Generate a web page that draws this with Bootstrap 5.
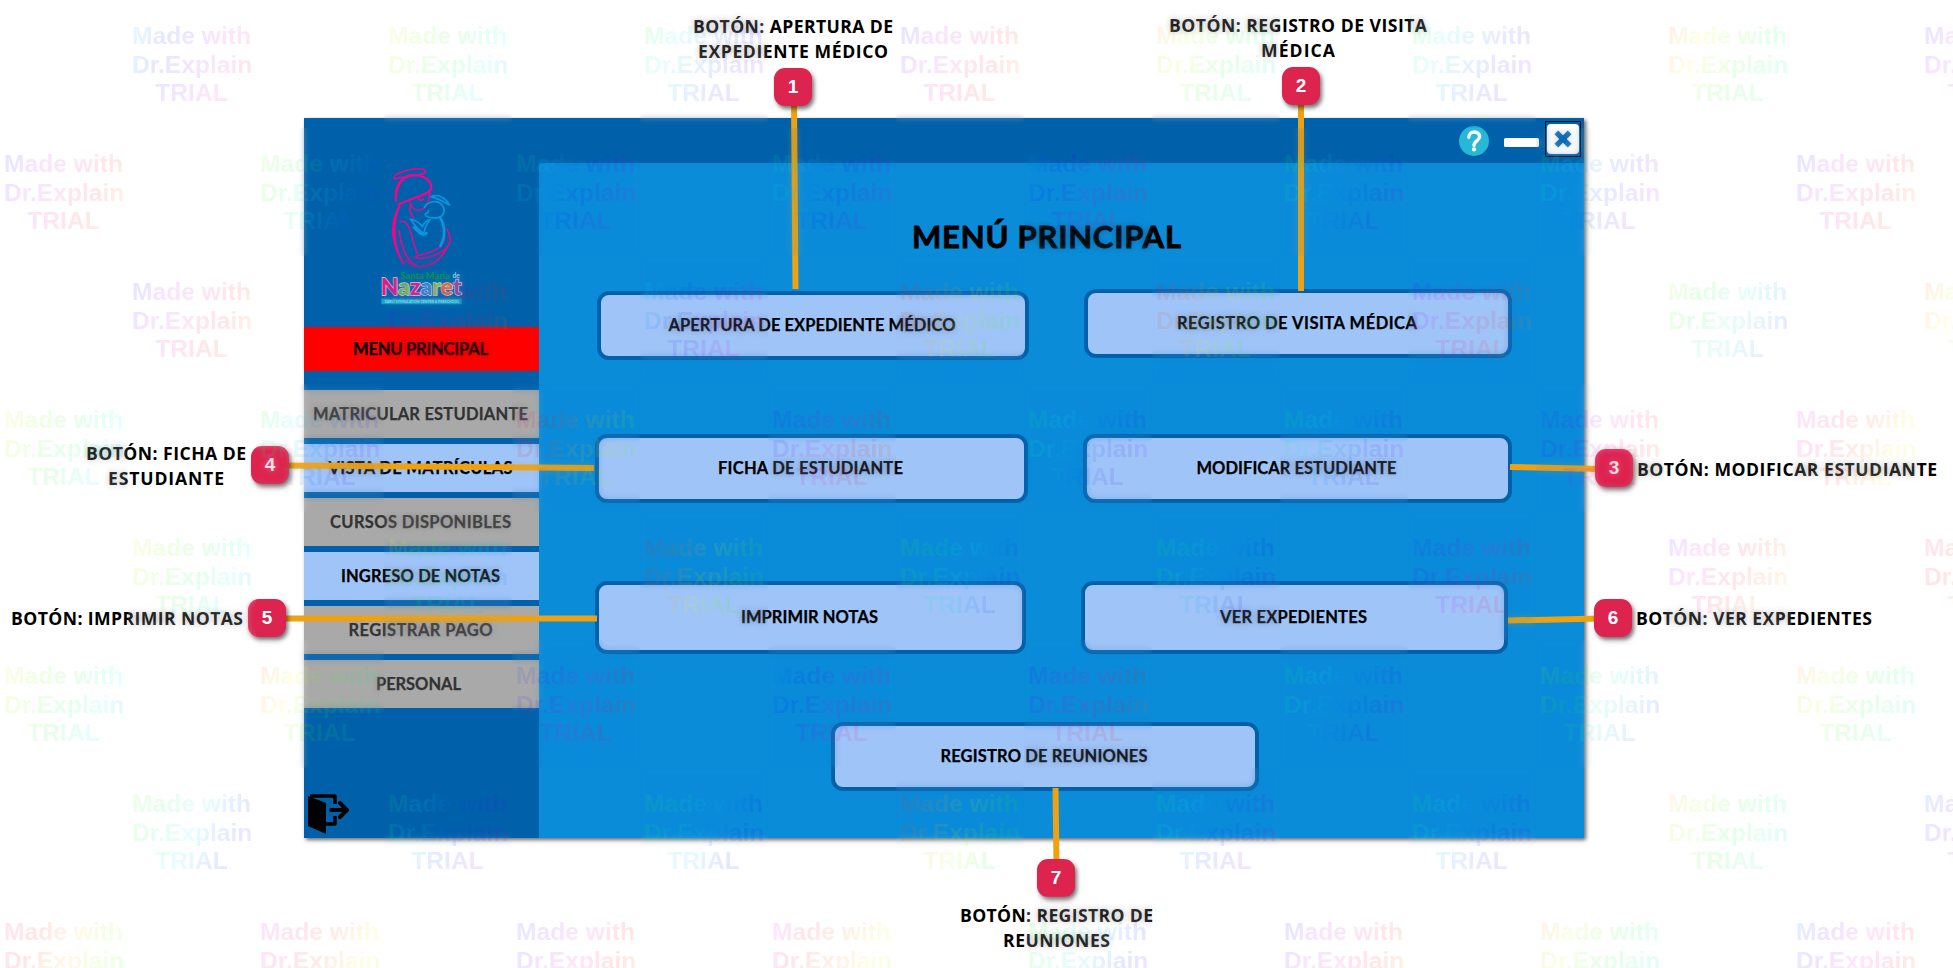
<!DOCTYPE html>
<html lang="es">
<head>
<meta charset="utf-8">
<title>Menú principal</title>
<link rel="stylesheet" href="https://cdn.jsdelivr.net/npm/bootstrap@5.3.0/dist/css/bootstrap.min.css">
<style>
  body { width: 1953px; height: 968px; background: #fff; color: #000; }
  .stage { width: 1953px; height: 968px; padding: 118px 0 0 304px; }
  .win { width: 1280px; height: 720px; background: #0a8cd9; box-shadow: 2px 2px 4px rgba(0,0,0,.6); }
  .side { width: 235px; background: #0061aa; }
  .ui { font-family: Lato, "Liberation Sans", sans-serif; font-weight: 700; font-size: 16.5px; line-height: 20px; }
  .ui .fit { position: relative; left: -1px; -webkit-text-stroke: .25px; }
  .brand { height: 209px; padding: 47px 0 0 76px; }
  .item { height: 48px; background: #a9a9a9; color: #333; }
  .item.on { background: #9fc4f8; color: #000; }
  .item.current { height: 44px; background: #f00; color: #000; margin-bottom: 19px; }
  .items { gap: 6px; }
  .top { height: 45px; background: #0061aa; padding-right: 3px; }
  .closer { width: 36px; height: 36px; border: 1px solid #000; background: #0061aa; padding: 2px 1px 2px; margin-top: 3px; }
  .closer > span { background: #fff; }
  h1.ui { font-size: 31px; line-height: 36px; margin: 55px 0 0 373px; }
  h1.ui .fit { left: 0; -webkit-text-stroke: .9px; }
  .opt { border: 4px solid #0061aa; border-radius: 12px; background: #9fc4f8; color: #000; padding-bottom: 2px; }
  .fit { display: inline-block; white-space: nowrap; }
  .callout { font-family: "Open Sans", "Noto Sans", sans-serif; font-weight: 700; font-size: 17.6px; line-height: 25px; }
  .pin { width: 38px; height: 38px; border-radius: 11px; background: #dc244f; color: #fff; box-shadow: 2px 3px 4px rgba(0,0,0,.55);
         font: 700 19px/38px "Liberation Sans", sans-serif; text-align: center; }
  .marks { display: grid; grid-template-columns: repeat(16, 128px); grid-auto-rows: 128px; width: 1953px; height: 968px; overflow: hidden; pointer-events: none; }
  .tile { position: relative; }
  .haze { position: absolute; inset: 0; opacity: .26; backdrop-filter: blur(3px); }
  .tint { position: absolute; left: 4px; top: 22px; width: 119px; opacity: .1; text-align: center;
          font: 700 24.6px/28.5px "Liberation Sans", sans-serif; color: transparent; -webkit-background-clip: text; background-clip: text; }
</style>
</head>
<body class="overflow-hidden position-relative">
<div class="stage">
  <div class="win d-flex">
    <aside class="side d-flex flex-column flex-shrink-0 ui">
      <div class="brand">
        <svg width="83" height="142" viewBox="270 165 250 427" fill="none" stroke-linecap="round" class="d-block">
          <g stroke="#f0058c" stroke-width="4.500">
            <path d="M312 204c0-14 40-28 76-28 26 0 24 12 4 17-18 4-50 5-76 14z"/>
            <path d="M318 272c-6-56 28-80 62-76 34 3 46 22 44 40-4 18-60 28-98 48" stroke-width="7"/>
            <path d="M330 284c-12 26-16 50-16 78 0 46 12 76 28 102-22-36-34-70-33-108 1-32 11-54 21-72z" fill="#f0058c" stroke-width="6"/>
            <path d="M318 262c0-40 22-62 52-68-34 6-46 30-52 68z" fill="#f0058c"/>
            <path d="M420 245c-2 30-12 54-34 56-12 0-20-8-24-20-6 20 0 30 10 44M386 268q6 6 14 0"/>
            <path d="M330 335c18-4 26 10 32 30 8 30 12 50 22 68"/>
            <path d="M328 362c2 20 6 44 20 72 12 24 24 36 44 38 50-2 76-46 90-78 2-14-6-24-10-36" stroke-width="5"/>
            <path d="M466 382c-6 40-48 44-92 60 10 10 70 0 92-26" stroke="#d0108c" stroke-width="5"/>
          </g>
          <path d="M348 452c22 26 56 24 80 6" stroke="#93278f" stroke-width="6"/>
          <g stroke="#0a96e0" stroke-width="5">
            <path d="M424 260c18-10 46 4 54 24-14-6-30-18-54-24z"/>
            <path d="M404 292c10-20 44-24 56-2 8 18-2 34-22 34-14 0-30-2-32-10 2-6 10-2 10-12"/>
            <path d="M362 328c14 2 26 10 36 22 4-12 12-18 24-22-10 10-16 24-20 42-14-6-26-22-40-42z"/>
            <path d="M372 352c14 16 26 28 38 18M450 322c14 20 20 54 2 86" stroke-width="8"/>
          </g>
          <g font-family="Lato, sans-serif" font-weight="700">
            <text x="332" y="507" font-size="28" font-weight="900" fill="#0b9a4b" textLength="148" lengthAdjust="spacingAndGlyphs">Santa María</text>
            <text x="488" y="506" font-size="20" fill="#a5e2fa">de</text>
            <text x="272" y="556" font-size="68" font-weight="900" textLength="244" lengthAdjust="spacingAndGlyphs" stroke="#d9e6f2" stroke-width="4" paint-order="stroke"><tspan fill="#ec1380">N</tspan><tspan fill="#7ec142">a</tspan><tspan fill="#ec1380">z</tspan><tspan fill="#2a86cf">a</tspan><tspan fill="#8dc63f">r</tspan><tspan fill="#f0642d">e</tspan><tspan fill="#9a3f9c">t</tspan></text>
            <rect x="274" y="567" width="242" height="17" fill="#12a5c8"/>
            <text x="284" y="580" font-size="11" fill="#bfe9f5" textLength="224" lengthAdjust="spacingAndGlyphs">EARLY STIMULATION CENTER &amp; PRESCHOOL</text>
          </g>
        </svg>
      </div>
      <div class="item current d-flex align-items-center justify-content-center"><span class="fit" data-w="135">MENU PRINCIPAL</span></div>
      <nav class="items d-flex flex-column">
        <div class="item d-flex align-items-center justify-content-center"><span class="fit" data-w="215">MATRICULAR ESTUDIANTE</span></div>
        <div class="item on d-flex align-items-center justify-content-center"><span class="fit" data-w="184">VISTA DE MATRÍCULAS</span></div>
        <div class="item d-flex align-items-center justify-content-center"><span class="fit" data-w="181">CURSOS DISPONIBLES</span></div>
        <div class="item on d-flex align-items-center justify-content-center"><span class="fit" data-w="159">INGRESO DE NOTAS</span></div>
        <div class="item d-flex align-items-center justify-content-center"><span class="fit" data-w="144">REGISTRAR PAGO</span></div>
        <div class="item d-flex align-items-center justify-content-center pe-1"><span class="fit" data-w="85">PERSONAL</span></div>
      </nav>
      <svg class="mt-auto ms-1 mb-1" width="41" height="40" viewBox="0 0 41 40">
        <path d="M2 2h25v8M27 22v8H18" fill="none" stroke="#000" stroke-width="3.600" stroke-linejoin="round"/>
        <path d="M0 2l18 7v31L0 32z"/>
        <path d="M23 16h15M32 9l7 7-7 7" fill="none" stroke="#000" stroke-width="4" stroke-linecap="round"/>
      </svg>
    </aside>
    <main class="flex-grow-1">
      <div class="top d-flex align-items-start justify-content-end">
        <svg width="30" height="30" viewBox="0 0 30 30" style="margin:8px 15px 0 0"><circle cx="15" cy="15" r="15" fill="#27b7d7"/><path d="M9.800 11.200c0-7 10.800-6.500 10.800-.6 0 4.500-5.600 4.200-5.600 8.800" fill="none" stroke="#fff" stroke-width="3.400" stroke-linecap="round"/><circle cx="15" cy="23.400" r="2.100" fill="#fff"/></svg>
        <svg width="35" height="9" style="margin:20px 6px 0 0"><rect width="35" height="9" rx="1.500" fill="#fff"/></svg>
        <div class="closer d-flex"><span class="flex-grow-1 d-flex align-items-center justify-content-center rounded-1"><svg width="20" height="20" viewBox="0 0 18 18"><path d="M3 3l12 12M15 3L3 15" stroke="#0061aa" stroke-width="4.800"/></svg></span></div>
      </div>
      <h1 class="ui"><span class="fit" data-w="269">MENÚ PRINCIPAL</span></h1>
      <div class="d-flex align-items-start ui" style="padding:35px 0 0 58px;height:179px">
        <div class="opt d-flex align-items-center justify-content-center" style="width:432px;height:69px;margin-top:2px"><span class="fit" data-w="287">APERTURA DE EXPEDIENTE MÉDICO</span></div>
        <div class="opt d-flex align-items-center justify-content-center" style="width:428px;height:69px;margin-left:55px"><span class="fit" data-w="240">REGISTRO DE VISITA MÉDICA</span></div>
      </div>
      <div class="d-flex ui" style="padding:1px 0 0 56px;height:148px">
        <div class="opt d-flex align-items-center justify-content-center" style="width:433px;height:69px"><span class="fit" data-w="185">FICHA DE ESTUDIANTE</span></div>
        <div class="opt d-flex align-items-center justify-content-center" style="width:429px;height:69px;margin-left:55px"><span class="fit" data-w="200">MODIFICAR ESTUDIANTE</span></div>
      </div>
      <div class="d-flex ui" style="padding:0 0 0 56px;height:141px">
        <div class="opt d-flex align-items-center justify-content-center" style="width:431px;height:73px"><span class="fit" data-w="137">IMPRIMIR NOTAS</span></div>
        <div class="opt d-flex align-items-center justify-content-center" style="width:427px;height:73px;margin-left:55px"><span class="fit" data-w="147">VER EXPEDIENTES</span></div>
      </div>
      <div class="opt ui d-flex align-items-center justify-content-center" style="width:428px;height:69px;margin-left:292px"><span class="fit" data-w="207">REGISTRO DE REUNIONES</span></div>
    </main>
  </div>
</div>

<!-- leader lines from each control to its numbered pin -->
<svg class="position-absolute top-0 start-0" width="1953" height="968" stroke="#eea111" stroke-width="6">
  <path d="M794 100L795.500 289M1301 100V291M1510 467L1600 469M285 465.500L594 468M280 618.500H597M1508 620.500L1600 618.500M1055.500 788L1056.500 865"/>
</svg>

<!-- pins and captions: left, top -->
<div class="pin position-absolute" style="left:774px;top:68px">1</div>
<div class="pin position-absolute" style="left:1282px;top:67px">2</div>
<div class="pin position-absolute" style="left:1595px;top:449px">3</div>
<div class="pin position-absolute" style="left:251px;top:446px">4</div>
<div class="pin position-absolute" style="left:248px;top:599px">5</div>
<div class="pin position-absolute" style="left:1594px;top:599px">6</div>
<div class="pin position-absolute" style="left:1037px;top:859px">7</div>

<div class="callout text-center position-absolute" style="left:693px;top:14px"><span class="fit" data-w="200">BOTÓN: APERTURA DE</span><br><span class="fit" data-w="190">EXPEDIENTE MÉDICO</span></div>
<div class="callout text-center position-absolute" style="left:1169px;top:13px"><span class="fit" data-w="258">BOTÓN: REGISTRO DE VISITA</span><br><span class="fit" data-w="74">MÉDICA</span></div>
<div class="callout position-absolute" style="left:1637px;top:457px"><span class="fit" data-w="300">BOTÓN: MODIFICAR ESTUDIANTE</span></div>
<div class="callout text-center position-absolute" style="left:86px;top:441px"><span class="fit" data-w="160">BOTÓN: FICHA DE</span><br><span class="fit" data-w="116">ESTUDIANTE</span></div>
<div class="callout position-absolute" style="left:11px;top:606px"><span class="fit" data-w="232">BOTÓN: IMPRIMIR NOTAS</span></div>
<div class="callout position-absolute" style="left:1636px;top:606px"><span class="fit" data-w="236">BOTÓN: VER EXPEDIENTES</span></div>
<div class="callout text-center position-absolute" style="left:960px;top:903px"><span class="fit" data-w="193">BOTÓN: REGISTRO DE</span><br><span class="fit" data-w="107">REUNIONES</span></div>

<div class="marks position-absolute top-0 start-0" id="marks"></div>

<script src="https://cdn.jsdelivr.net/npm/bootstrap@5.3.0/dist/js/bootstrap.bundle.min.js"></script>
<script>
  // track each caption out to its set measure
  document.querySelectorAll('.fit').forEach(function (el) {
    var n = el.textContent.length - 1;
    var gap = (el.dataset.w - el.getBoundingClientRect().width) / n;
    el.style.letterSpacing = gap + 'px';
    el.style.marginRight = -gap + 'px';
  });
  // trial stamp on alternate squares; one starting hue per stamp
  var hues = [
    [190, 50, 130, 240, 30, 130, 20, 250],
    [240, 90, 150, 150, 200, 130, 140, 240],
    [240, 240, 180, 340, 340, 250, 80, 20],
    [50, 130, 320, 230, 130, 130, 220, 290],
    [50, 60, 340, 100, 120, 220, 260, 320],
    [50, 20, 220, 200, 240, 130, 80, 30],
    [100, 140, 110, 350, 140, 130, 40, 220],
    [320, 290, 230, 300, 110, 240, 30, 220]
  ];
  var html = '';
  hues.forEach(function (row, r) {
    row.forEach(function (h, i) {
      var c = 2 * i + (r % 2 ? 1 : 2), stops = [];
      for (var k = 0; k < 5; k++) stops.push('hsl(' + (h + k * 42) % 360 + ' 100% 50%)');
      html += '<div class="tile" style="grid-area:' + (r + 1) + '/' + c + '"><div class="haze"></div>' +
        '<div class="tint" style="background-image:linear-gradient(115deg,' + stops + ')">Made with<br>Dr.Explain<br>TRIAL</div></div>';
    });
  });
  document.getElementById('marks').innerHTML = html;
</script>
</body>
</html>
